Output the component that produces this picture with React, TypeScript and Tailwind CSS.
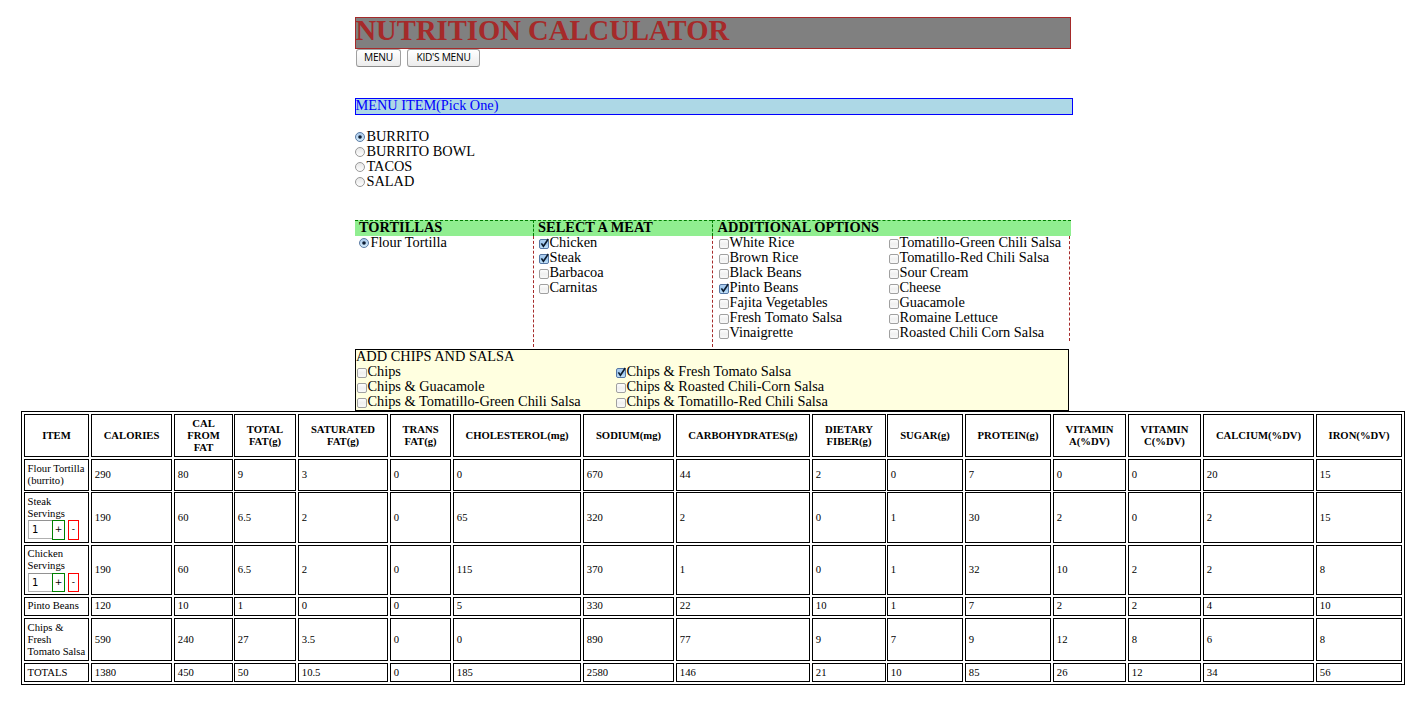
import { Fragment, type ReactNode } from 'react';

function Radio({ checked = false }: { checked?: boolean }) {
  return (
    <svg width="10" height="10" viewBox="0 0 10 10" className="mt-[3px] shrink-0">
      <defs>
        <linearGradient id={checked ? 'radioOn' : 'radioOff'} x1="0" y1="0" x2="0" y2="1">
          <stop offset="0" stopColor={checked ? '#a9c8ea' : '#e6e6e6'} />
          <stop offset="1" stopColor={checked ? '#d3ecfb' : '#ffffff'} />
        </linearGradient>
      </defs>
      <circle cx="5" cy="5" r="4.5" fill={checked ? 'url(#radioOn)' : 'url(#radioOff)'} stroke={checked ? '#5c7ba3' : '#999999'} strokeWidth="1" />
      {checked && <circle cx="5" cy="5" r="1.8" fill="#0c1c33" />}
    </svg>
  );
}

function Check({ checked = false }: { checked?: boolean }) {
  return (
    <svg width="10" height="11" viewBox="0 -1 10 11" className="mt-[3px] shrink-0 overflow-visible">
      <defs>
        <linearGradient id={checked ? 'checkOn' : 'checkOff'} x1="0" y1="0" x2="0" y2="1">
          <stop offset="0" stopColor={checked ? '#b4d2f0' : '#ffffff'} />
          <stop offset="0.5" stopColor={checked ? '#9cc6ee' : '#f0f0f0'} />
          <stop offset="1" stopColor={checked ? '#c8e6fb' : '#fafafa'} />
        </linearGradient>
      </defs>
      <rect x="0.5" y="0.5" width="9" height="9" rx="1.5" fill={checked ? 'url(#checkOn)' : 'url(#checkOff)'} stroke={checked ? '#5577a5' : '#a0a0a0'} />
      {checked && <path d="M2.4 4.4 L4.4 7.3 L9.3 0" fill="none" stroke="#0c1a2c" strokeWidth="1.6" />}
    </svg>
  );
}

function Option({ label, checked, radio }: { label: string; checked?: boolean; radio?: boolean }) {
  return (
    <label className="flex h-[15px] whitespace-nowrap">
      {radio ? <Radio checked={checked} /> : <Check checked={checked} />}
      <span className={radio ? 'ml-[1.4px]' : 'ml-[0.4px]'}>{label}</span>
    </label>
  );
}

function Head({ children, className }: { children: ReactNode; className: string }) {
  return (
    <div className={'h-4 border-t border-dashed border-[#008000] bg-[#90ee90] leading-[13px] font-bold tracking-[0.04px] whitespace-nowrap ' + className}>{children}</div>
  );
}

function Options({ items }: { items: string[] }) {
  return (
    <div className="-mt-px flex flex-col">
      {items.map((item) => (
        <Option key={item} label={item} checked={['Chicken', 'Steak', 'Pinto Beans', 'Chips & Fresh Tomato Salsa'].includes(item)} />
      ))}
    </div>
  );
}

const columns = ['ITEM', 'CALORIES', 'CAL|FROM|FAT', 'TOTAL|FAT(g)', 'SATURATED|FAT(g)', 'TRANS|FAT(g)', 'CHOLESTEROL(mg)', 'SODIUM(mg)', 'CARBOHYDRATES(g)', 'DIETARY|FIBER(g)', 'SUGAR(g)', 'PROTEIN(g)', 'VITAMIN|A(%DV)', 'VITAMIN|C(%DV)', 'CALCIUM(%DV)', 'IRON(%DV)'];

const rows = [
  { name: 'Flour Tortilla|(burrito)', height: 'h-8 mb-px', pad: 'items-center pb-0.5 ', values: [290, 80, 9, 3, 0, 0, 670, 44, 2, 0, 7, 0, 0, 20, 15] },
  { name: 'Steak|Servings', height: 'h-[51px] mb-0.5', pad: 'items-center pb-0.5 ', first: 'items-start pt-0.5 ', box: 'mt-px h-5 ', values: [190, 60, 6.5, 2, 0, 65, 320, 2, 0, 1, 30, 2, 0, 2, 15] },
  { name: 'Chicken|Servings', height: 'h-[50px] mb-0.5', pad: 'items-center pb-0.5 ', first: 'items-start pt-px ', box: 'mt-0.5 h-[19px] ', values: [190, 60, 6.5, 2, 0, 115, 370, 1, 0, 1, 32, 10, 2, 2, 8] },
  { name: 'Pinto Beans', height: 'h-[19px] mb-0.5', pad: 'items-start pt-px ', values: [120, 10, 1, 0, 0, 5, 330, 22, 10, 1, 7, 2, 2, 4, 10] },
  { name: 'Chips &|Fresh|Tomato Salsa', height: 'h-[43px] mb-0.5', pad: 'items-center pb-0.5 ', values: [590, 240, 27, 3.5, 0, 0, 890, 77, 9, 7, 9, 12, 8, 6, 8] },
  { name: 'TOTALS', height: 'h-[19px]', pad: 'items-start pt-0.5 ', values: [1380, 450, 50, 10.5, 0, 185, 2580, 146, 21, 10, 85, 26, 12, 34, 56] },
];

const rowGrid = 'grid grid-cols-[67px_83px_60px_64px_92px_63px_130px_93px_136px_75px_78px_88px_75px_75px_113px_88px] ';
const cell = 'flex border border-black whitespace-nowrap ';
const edge = (i: number) => (i === 2 || i === 9 ? 'mr-px ' : 'mr-0.5 ');

function Lines({ text }: { text: string }) {
  return (
    <div>
      {text.split('|').map((line, i) => (
        <Fragment key={line}>
          {i > 0 && <br />}
          {line}
        </Fragment>
      ))}
    </div>
  );
}

function Servings({ count, className }: { count: number; className: string }) {
  return (
    <div className={"ml-[0.4px] flex font-['DejaVu_Sans',sans-serif] text-[10px] leading-[17px] " + className}>
      <span className="h-[19px] w-6 border border-r-0 border-[#b0b0b0] border-t-[#929292] pl-[3px]">{count}</span>
      <span className="flex w-[13px] justify-center border border-[#008000] text-[9px] leading-[17px]">+</span>
      <span className="ml-[3px] flex w-[11px] justify-center border border-[#ff0000] text-[9px] leading-[17px]">-</span>
    </div>
  );
}

function MacButton({ children, className }: { children: ReactNode; className: string }) {
  return (
    <button className={"h-[18px] rounded-[3px] border border-[#a0a0a0] border-b-[#8c8c8c] bg-linear-to-b from-white to-[#ececec] pb-px font-['Open_Sans',sans-serif] text-[10.2px] leading-[15px] font-medium tracking-[-0.28px] whitespace-nowrap " + className}>{children}</button>
  );
}

export default function App() {
  return (
    <div className="h-[702px] w-[1424px] overflow-hidden bg-white pt-[17px] font-['Liberation_Serif',serif] text-[14.36px] leading-[15px] text-black">
      <main className="ml-[355px] w-[718px]">
        <h1 className="h-8 w-[716px] border border-[#a52a2a] bg-[#808080] indent-[-0.6px] text-[28.65px] leading-[24px] font-bold whitespace-nowrap text-[#a52a2a]">NUTRITION CALCULATOR</h1>
        <div className="ml-px flex h-[49px] gap-1.5">
          <MacButton className="w-[45px]">MENU</MacButton>
          <MacButton className="w-[73px]">KID'S MENU</MacButton>
        </div>
        <h2 className="h-[17px] border border-[#0000ff] bg-[#add8e6] indent-[-0.5px] text-[14.3px] leading-[13px] text-[#0000ff]">MENU ITEM(Pick One)</h2>
        <div className="mt-3.5 flex h-[91px] flex-col">
          <Option radio checked label="BURRITO" />
          <Option radio label="BURRITO BOWL" />
          <Option radio label="TACOS" />
          <Option radio label="SALAD" />
        </div>

        <section className="flex h-[129px] w-[716px]">
          <div className="w-[178px]">
            <Head className="pl-1">TORTILLAS</Head>
            <div className="-mt-px pl-1">
              <Option radio checked label="Flour Tortilla" />
            </div>
          </div>
          <div className="w-[179px]">
            <Head className="border-l pl-1">SELECT A MEAT</Head>
            <div className="flex h-[111px] border-l border-dashed border-[#a52a2a] pl-[5px]">
              <Options items={['Chicken', 'Steak', 'Barbacoa', 'Carnitas']} />
            </div>
          </div>
          <div className="w-[359px]">
            <Head className="border-l pl-[4.6px]">ADDITIONAL OPTIONS</Head>
            <div className="flex h-[111px] w-[358px] border-l border-dashed border-[#a52a2a] pl-1.5">
              <div className="flex w-[170px]">
                <Options items={['White Rice', 'Brown Rice', 'Black Beans', 'Pinto Beans', 'Fajita Vegetables', 'Fresh Tomato Salsa', 'Vinaigrette']} />
              </div>
              <div className="flex h-[105px] flex-1 border-r border-dashed border-[#a52a2a]">
                <Options items={['Tomatillo-Green Chili Salsa', 'Tomatillo-Red Chili Salsa', 'Sour Cream', 'Cheese', 'Guacamole', 'Romaine Lettuce', 'Roasted Chili Corn Salsa']} />
              </div>
            </div>
          </div>
        </section>

        <section className="h-[62px] w-[714px] border border-black bg-[#ffffe0]">
          <h3 className="h-[15px] leading-[13px]">ADD CHIPS AND SALSA</h3>
          <div className="flex pl-px">
            <div className="w-[259px]">
              <Options items={['Chips', 'Chips & Guacamole', 'Chips & Tomatillo-Green Chili Salsa']} />
            </div>
            <Options items={['Chips & Fresh Tomato Salsa', 'Chips & Roasted Chili-Corn Salsa', 'Chips & Tomatillo-Red Chili Salsa']} />
          </div>
        </section>
      </main>

      <table className="ml-[21px] block h-[274px] w-[1384px] border border-black pt-0.5 pl-0.5 text-[10.67px] leading-3">
        <thead className="block">
          <tr className={rowGrid + 'mb-0.5 h-[43px]'}>
            {columns.map((name, i) => (
              <th key={name} className={cell + edge(i) + 'items-center justify-center pb-0.5 text-center'}>
                <Lines text={name} />
              </th>
            ))}
          </tr>
        </thead>
        <tbody className="block">
          {rows.map((row) => (
            <tr key={row.name} className={rowGrid + row.height}>
              <td className={cell + 'mr-0.5 pl-[2.6px] ' + (row.first ?? row.pad)}>
                <div>
                  <Lines text={row.name} />
                  {row.box && <Servings count={1} className={row.box} />}
                </div>
              </td>
              {row.values.map((value, i) => (
                <td key={columns[i + 1]} className={cell + edge(i + 1) + 'pl-[2.8px] ' + row.pad}>{value}</td>
              ))}
            </tr>
          ))}
        </tbody>
      </table>
    </div>
  );
}
